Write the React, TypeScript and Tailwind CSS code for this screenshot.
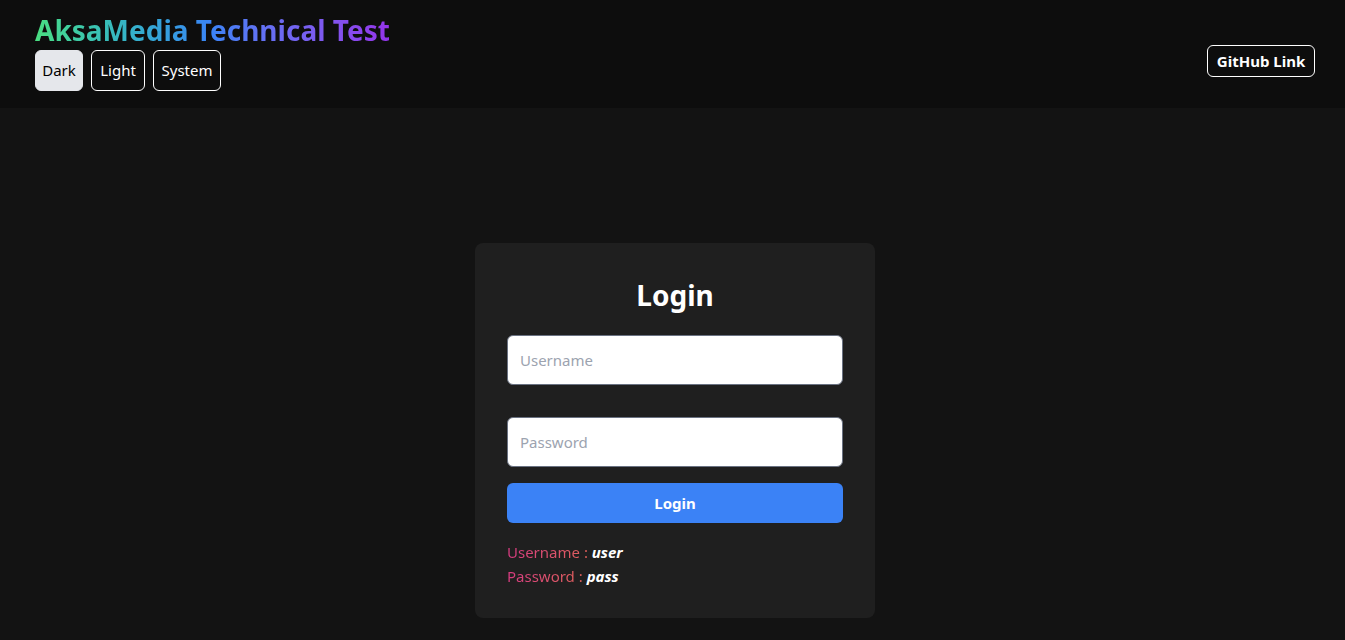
import React from "react";

export default function App() {
  const font = { fontFamily: '"Noto Sans", "Open Sans", sans-serif' };
  return (
    <div className="min-h-screen bg-[#131313]" style={font}>
      <header className="flex h-[108px] items-start justify-between bg-[#0d0d0d] pl-[35px] pr-[30px]">
        <div className="flex flex-col pt-[11px]">
          <h1 className="bg-linear-to-r from-[#4ade80] via-[#3b82f6] to-[#9333ea] bg-clip-text text-[28px] leading-[38px] font-bold text-transparent">
            AksaMedia Technical Test
          </h1>
          <div className="mt-[1px] flex gap-2">
            <button className="h-[41px] w-[48px] rounded-md border border-[#e5e7eb] bg-[#e5e7eb] text-[15px] text-black">
              Dark
            </button>
            <button className="h-[41px] w-[54px] rounded-md border border-white text-[15px] text-white">
              Light
            </button>
            <button className="h-[41px] w-[68px] rounded-md border border-white text-[15px] text-white">
              System
            </button>
          </div>
        </div>
        <a className="mt-[45px] flex h-[32px] w-[108px] items-center justify-center rounded-md border border-white text-[15px] font-bold text-white">
          GitHub Link
        </a>
      </header>
      <main className="flex justify-center pl-[5px] pt-[135px]">
        <div className="flex h-[375px] w-[400px] flex-col rounded-lg bg-[#1f1f1f] px-8 pt-[32px]">
          <h2 className="text-center text-[28px] leading-[40px] font-bold text-white">Login</h2>
          <input
            placeholder="Username"
            className="mt-[20px] h-[50px] w-full rounded-md border border-gray-500 bg-white px-3 text-[15px] text-black placeholder:text-[#9ca3af] outline-none"
          />
          <input
            type="password"
            placeholder="Password"
            className="mt-[32px] h-[50px] w-full rounded-md border border-gray-500 bg-white px-3 text-[15px] text-black placeholder:text-[#9ca3af] outline-none"
          />
          <button className="mt-[16px] h-[40px] w-full rounded-md bg-[#3b82f6] text-[15px] font-bold text-white">
            Login
          </button>
          <div className="mt-[17px] flex flex-col text-[15px] leading-[24px]">
            <p>
              <span className="bg-linear-to-r from-[#d63a80] to-[#e0605a] bg-clip-text text-transparent">Username :</span>{" "}
              <span className="font-bold italic text-white">user</span>
            </p>
            <p>
              <span className="bg-linear-to-r from-[#d63a80] to-[#e0605a] bg-clip-text text-transparent">Password :</span>{" "}
              <span className="font-bold italic text-white">pass</span>
            </p>
          </div>
        </div>
      </main>
    </div>
  );
}
